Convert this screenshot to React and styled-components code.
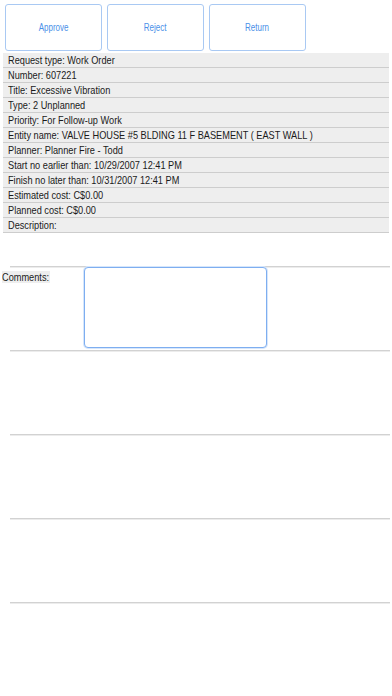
import React from "react";
import styled, { createGlobalStyle } from "styled-components";

const Global = createGlobalStyle`
  html, body { margin: 0; padding: 0; background: #ffffff; }
  body { font-family: "Liberation Sans", Arial, sans-serif; }
  #root { width: 392px; min-height: 696px; background: #ffffff; }
`;

const Page = styled.div`
  display: flex;
  flex-direction: column;
  width: 392px;
  height: 696px;
  overflow: hidden;
`;

const Toolbar = styled.div`
  display: flex;
  gap: 5px;
  padding: 4px 0 0 5px;
`;

const ActionButton = styled.button`
  width: 97px;
  height: 47px;
  box-sizing: border-box;
  background: #ffffff;
  border: 1px solid #a9c9f3;
  border-radius: 3px;
  color: #4a90e8;
  font-family: "Liberation Sans", Arial, sans-serif;
  font-size: 10px;
  padding: 0;
  display: flex;
  align-items: center;
  justify-content: center;
  cursor: pointer;
`;

/* The reference renders a condensed Helvetica; no condensed face is installed,
   so the glyphs are narrowed horizontally. */
const Condensed = styled.span`
  display: inline-block;
  white-space: nowrap;
  transform: scaleX(${(p) => p.$scale || 0.8});
  transform-origin: ${(p) => (p.$center ? "center" : "left")} center;
`;

const InfoList = styled.div`
  display: flex;
  flex-direction: column;
  margin: 2px 3px 0 3px;
  background: #eeeeee;
`;

const InfoRow = styled.div`
  height: 15px;
  box-sizing: border-box;
  border-bottom: 1px solid #cdcdcd;
  padding-left: 5px;
  display: flex;
  align-items: center;
  font-size: 11.5px;
  color: #1a1a1a;
  white-space: nowrap;
  overflow: hidden;
`;

const Separator = styled.div`
  height: 1px;
  margin: 0 2px 0 10px;
  background: #d2d2d2;
  box-shadow: 0 1px 0 #ececec;
`;

const Cell = styled.div`
  height: 83px;
  display: flex;
  align-items: flex-start;
`;

const CommentLabel = styled.span`
  margin: 4px 0 0 2px;
  width: 48px;
  height: 12px;
  background: #eeeeee;
  font-size: 11.5px;
  line-height: 12px;
  color: #1a1a1a;
  overflow: hidden;
`;

const CommentBox = styled.textarea`
  margin: 0 0 0 34px;
  width: 183px;
  height: 81px;
  box-sizing: border-box;
  border: 1px solid #7eaef0;
  border-radius: 4px;
  box-shadow: 0 0 0 1px #d6e6fb;
  resize: none;
  outline: none;
  background: #ffffff;
`;

const Spacer = styled.div`
  height: 33px;
`;

const rows = [
  "Request type: Work Order",
  "Number: 607221",
  "Title: Excessive Vibration",
  "Type: 2 Unplanned",
  "Priority: For Follow-up Work",
  "Entity name: VALVE HOUSE #5 BLDING 11 F BASEMENT ( EAST WALL )",
  "Planner: Planner Fire - Todd",
  "Start no earlier than: 10/29/2007 12:41 PM",
  "Finish no later than: 10/31/2007 12:41 PM",
  "Estimated cost: C$0.00",
  "Planned cost: C$0.00",
  "Description:",
];

const actions = ["Approve", "Reject", "Return"];

export default function App() {
  return (
    <>
      <Global />
      <Page>
        <Toolbar>
          {actions.map((a) => (
            <ActionButton key={a}>
              <Condensed $center>{a}</Condensed>
            </ActionButton>
          ))}
        </Toolbar>
        <InfoList>
          {rows.map((r) => (
            <InfoRow key={r}>
              <Condensed>{r}</Condensed>
            </InfoRow>
          ))}
        </InfoList>
        <Spacer />
        <Separator />
        <Cell>
          <CommentLabel>
            <Condensed>Comments:</Condensed>
          </CommentLabel>
          <CommentBox />
        </Cell>
        <Separator />
        <Cell />
        <Separator />
        <Cell />
        <Separator />
        <Cell />
        <Separator />
      </Page>
    </>
  );
}
